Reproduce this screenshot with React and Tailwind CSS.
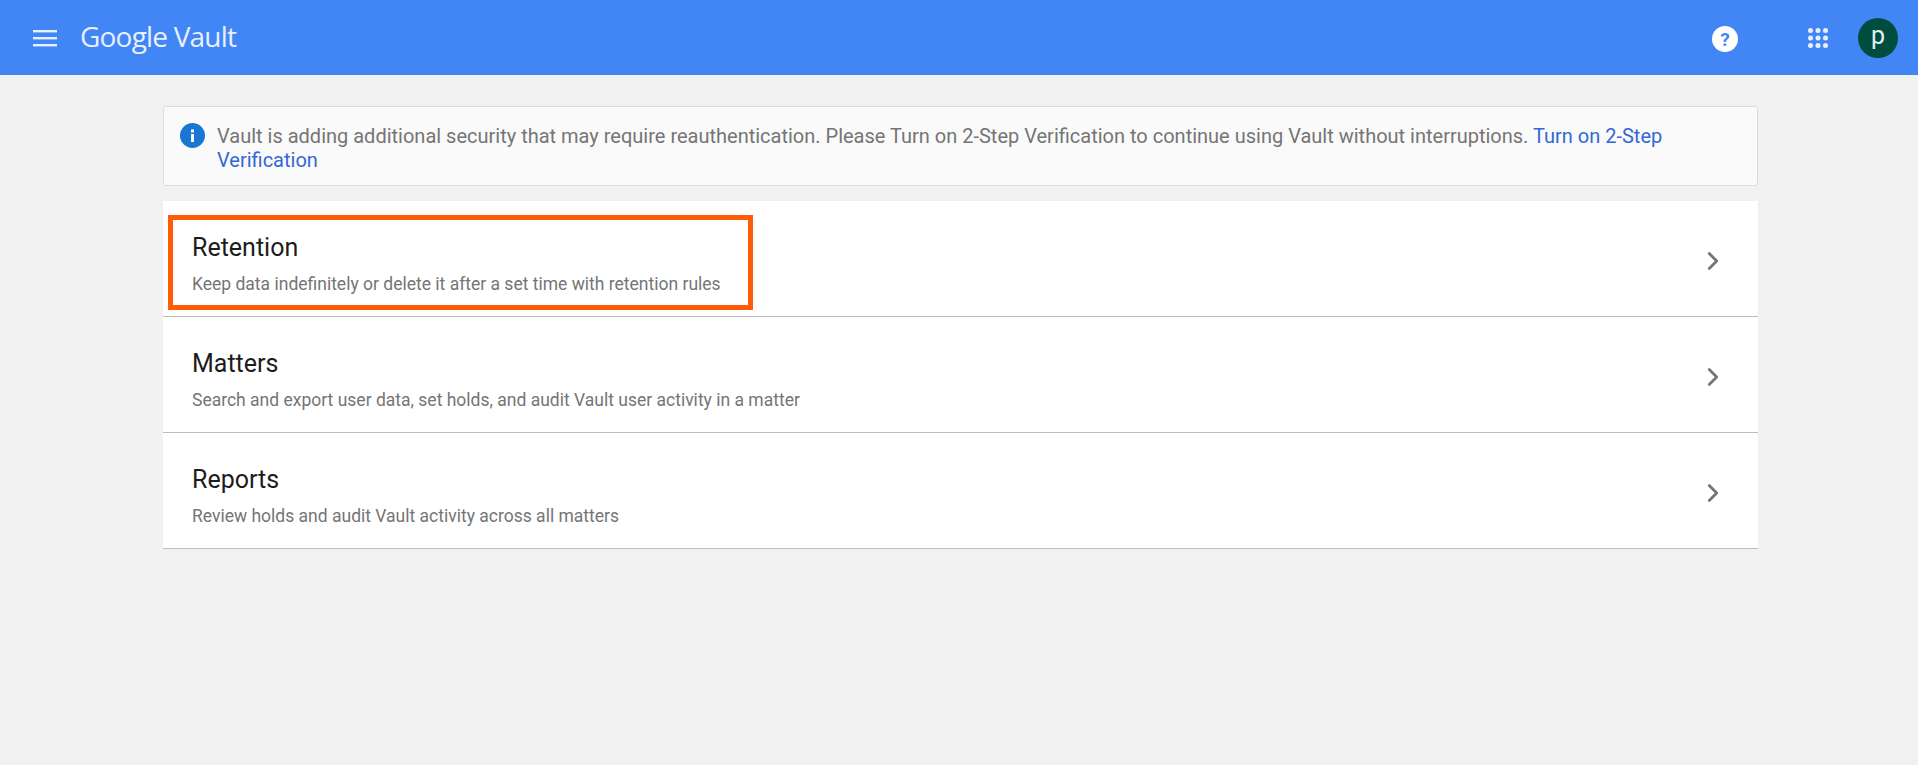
import { ChevronRight } from 'lucide-react'

const ROWS = [
  { title: 'Retention', text: 'Keep data indefinitely or delete it after a set time with retention rules', marked: true },
  { title: 'Matters', text: 'Search and export user data, set holds, and audit Vault user activity in a matter' },
  { title: 'Reports', text: 'Review holds and audit Vault activity across all matters' },
]

function AppsIcon() {
  const dots = [2.5, 10, 17.5]
  return (
    <svg width="20" height="20" viewBox="0 0 20 20" fill="#e8f0fe">
      {dots.map((y) => dots.map((x) => <circle key={`${x}-${y}`} cx={x} cy={y} r="2.5" />))}
    </svg>
  )
}

function Row({ title, text, marked }) {
  return (
    <div className="relative flex h-[116px] items-center justify-between border-b border-[#bdbdbd] pl-[29px] pr-[30px]">
      <div className="pt-[11px]">
        <div className="text-[25px] leading-[30px] text-[#1c1c1c]">{title}</div>
        <div className="mt-[9px] text-[17.5px] leading-[24px] text-[#757575]">{text}</div>
      </div>
      <ChevronRight className="mt-[4px] size-[30px] text-[#757575]" strokeWidth={2.2} />
      {marked && <div className="absolute left-[5px] top-[14px] h-[95px] w-[585px] border-[5px] border-[#ff5c07]" />}
    </div>
  )
}

export default function App() {
  return (
    <div className="min-h-[765px] bg-[#f1f1f1] font-['Roboto',sans-serif]">
      <header className="flex h-[75px] items-center bg-[#4285f4] pr-[20px]">
        <svg className="ml-[33px]" width="24" height="18" viewBox="0 0 24 18" fill="#e8f0fe">
          <rect x="0" y="1" width="24" height="2.4" />
          <rect x="0" y="8" width="24" height="2.4" />
          <rect x="0" y="15" width="24" height="2.4" />
        </svg>
        <div className="mb-[3px] ml-[23px] font-['Open_Sans',sans-serif] text-[28px] tracking-[-0.8px] text-[#e8f0fe]">Google Vault</div>
        <div className="flex-1" />
        <svg className="mt-[2px]" width="26" height="26" viewBox="0 0 26 26">
          <circle cx="13" cy="13" r="13" fill="#fff" />
          <text x="13" y="19.5" textAnchor="middle" fontSize="19" fontWeight="700" fill="#4285f4" fontFamily="Roboto, sans-serif">?</text>
        </svg>
        <div className="ml-[70px] flex"><AppsIcon /></div>
        <div className="ml-[30px] flex size-10 items-center justify-center rounded-full bg-[#004d40] pb-1 text-[25px] text-[#e0f2f1]">p</div>
      </header>

      <main className="ml-[163px] w-[1595px] pt-[31px]">
        <div className="flex h-[80px] items-start rounded-[3px] border border-[#dcdcdc] bg-[#fafafa] pl-4 pr-[70px] pt-[16px]">
          <svg className="mr-[12px] shrink-0" width="25" height="25" viewBox="0 0 25 25">
            <circle cx="12.5" cy="12.5" r="12.5" fill="#1976d2" />
            <rect x="11" y="11" width="3" height="8" fill="#fff" />
            <rect x="11" y="6.5" width="3" height="3" fill="#fff" />
          </svg>
          <p className="pt-[1px] text-[20px] leading-6 text-[#757575]">
            Vault is adding additional security that may require reauthentication. Please Turn on 2-Step Verification to continue using Vault without interruptions.{' '}
            <span className="text-[#3367d6]">Turn on 2-Step Verification</span>
          </p>
        </div>

        <div className="mt-[15px] bg-white">
          {ROWS.map((row) => <Row key={row.title} {...row} />)}
        </div>
      </main>
    </div>
  )
}
